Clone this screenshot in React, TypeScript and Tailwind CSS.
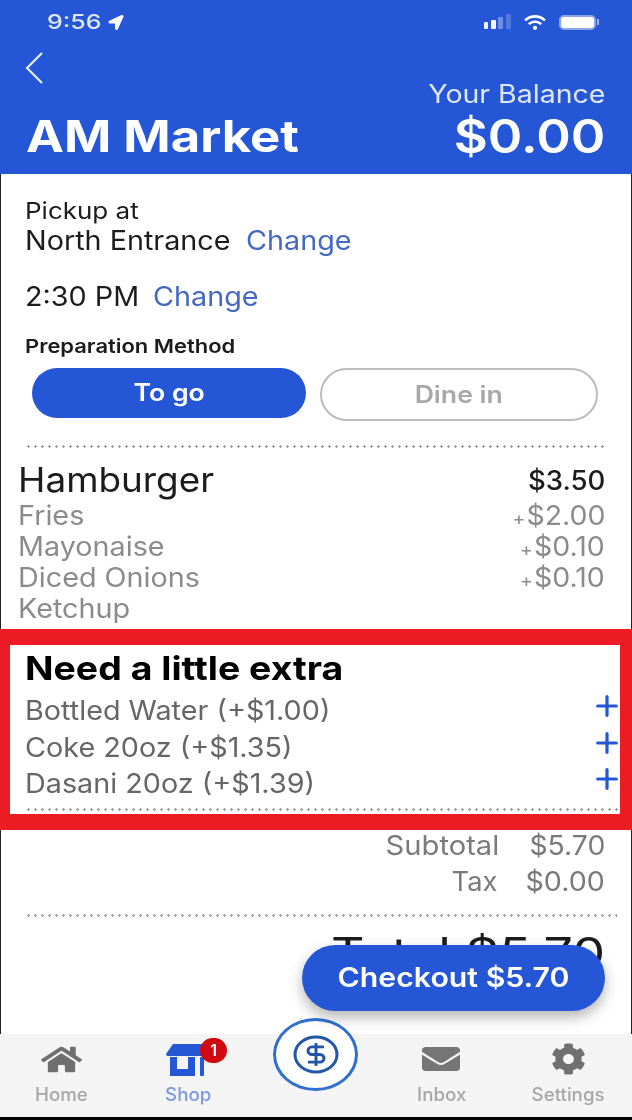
import { Plus } from "lucide-react";
import { FaCog, FaEnvelope, FaHome, FaLocationArrow, FaWifi } from "react-icons/fa";

const sides = [
  { name: "Fries", price: "$2.00" },
  { name: "Mayonaise", price: "$0.10" },
  { name: "Diced Onions", price: "$0.10" },
  { name: "Ketchup", price: "" },
];

const extras = ["Bottled Water (+$1.00)", "Coke 20oz (+$1.35)", "Dasani 20oz (+$1.39)"];

// the screenshot is stretched sideways, so most text gets a horizontal scale
const wideLeft = "inline-block origin-left scale-x-[1.085]";
const wideRight = "inline-block origin-right scale-x-[1.075]";

function Dots({ className }: { className: string }) {
  return (
    <div
      className={`h-[3px] shrink-0 bg-[radial-gradient(circle,#9a9a9a_1.1px,transparent_1.4px)] bg-[length:7px_3px] ${className}`}
    />
  );
}

function StatusBar() {
  return (
    <div className="flex h-[44px] items-center justify-between pl-[47px] pr-[33px] text-[#dfe7fa]">
      <div className="flex items-center gap-[17px] text-[20px] font-medium leading-none">
        <span className="inline-block origin-left scale-x-[1.25]">9:56</span>
        <FaLocationArrow className="h-[15px] w-[16px] text-white" />
      </div>
      <div className="flex items-center gap-[11px]">
        <svg width="28" height="16" viewBox="0 0 28 16">
          <rect x="0" y="8" width="4" height="7" rx="1" fill="#f2f5fe" />
          <rect x="7" y="6" width="5" height="9" rx="1" fill="#f2f5fe" />
          <rect x="14" y="3" width="5" height="12" rx="1" fill="#6f90e6" />
          <rect x="22" y="0" width="5" height="15" rx="1" fill="#4f78e0" />
        </svg>
        <FaWifi className="h-[17px] w-[24px] text-white" />
        <div className="ml-[1px] flex items-center gap-[1px]">
          <div className="h-[15px] w-[37px] rounded-[5px] border-2 border-[#8aa5ea] bg-white" />
          <div className="h-[6px] w-[2px] bg-[#9fb5ee]" />
        </div>
      </div>
    </div>
  );
}

function ShopIcon() {
  return (
    <svg width="43" height="32" viewBox="0 0 43 32" fill="#2456d6">
      <path d="M7 0h29l7 10a2 2 0 0 1-2 2H2a2 2 0 0 1-2-2z" />
      <path d="M4 13h25v19H4zM11 13v12h11V13z" fillRule="evenodd" />
      <rect x="34" y="13" width="4" height="19" rx="1" />
    </svg>
  );
}

function PayIcon() {
  return (
    <svg width="46" height="39" viewBox="0 0 46 39" fill="none" stroke="#2456a8" strokeWidth="3">
      <ellipse cx="23" cy="19.5" rx="21" ry="17.5" />
      <g transform="translate(23 19.5) scale(2 1.9) translate(-12 -12)" strokeWidth="1.5">
        <path d="M16 8h-6a2 2 0 1 0 0 4h4a2 2 0 1 1 0 4H8" />
        <path d="M12 18V6" />
      </g>
    </svg>
  );
}

function NavItem({ label, active, children }: { label: string; active?: boolean; children: React.ReactNode }) {
  return (
    <div className="flex w-[90px] flex-col items-center">
      <div className="flex h-[50px] items-center">{children}</div>
      <span
        className={`-mt-[1px] inline-block scale-x-[1.04] text-[18px] font-medium leading-[24px] ${active ? "text-[#7f99de]" : "text-[#a6a6a6]"}`}
      >
        {label}
      </span>
    </div>
  );
}

export default function App() {
  return (
    <div
      className="relative flex h-[1120px] w-[632px] flex-col overflow-hidden border-b-[3px] border-black bg-white text-[#1c1c1c] shadow-[inset_1px_0_0_#222,inset_-1px_0_0_#222] blur-[0.6px]"
      style={{ fontFamily: "Inter, 'Liberation Sans', sans-serif" }}
    >
      <header className="h-[174px] shrink-0 bg-[#2456d6] text-white">
        <StatusBar />
        <svg className="ml-[24px] mt-[8px]" width="20" height="32" viewBox="0 0 20 32" fill="none" stroke="#e6ecfb" strokeWidth="2.2">
          <path d="M18 1 3 16l15 15" />
        </svg>
        <div className="-mt-[5px] flex items-end justify-between pl-[26px] pr-[27px]">
          <h1 className="mb-[2px] origin-left scale-x-[1.155] text-[44px] font-bold leading-[50px]">AM Market</h1>
          <div className="text-right">
            <div className="origin-right scale-x-[1.14] text-[25px] leading-[30px] text-[#dfe7fa]">Your Balance</div>
            <div className="origin-right scale-x-[1.14] text-[46px] font-semibold leading-[54px]">$0.00</div>
          </div>
        </div>
      </header>

      <section className="pl-[25px] pr-[34px] pt-[23px]">
        <div className="origin-left scale-x-[1.13] text-[23px] leading-[28px]">Pickup at</div>
        <div className="flex text-[26.5px] leading-[30px]">
          <span className={wideLeft}>North Entrance</span>
          <span className={`ml-[32px] text-[#4468c4] ${wideLeft}`}>Change</span>
        </div>
        <div className="mt-[26px] flex text-[26.5px] leading-[30px]">
          <span className={wideLeft}>2:30 PM</span>
          <span className={`ml-[23px] text-[#4468c4] ${wideLeft}`}>Change</span>
        </div>
        <div className="mt-[24px] origin-left scale-x-[1.155] text-[19px] font-semibold leading-[24px]">Preparation Method</div>
        <div className="ml-[7px] mt-[9px] flex gap-[14px]">
          <div className="flex h-[50px] w-[274px] items-center justify-center rounded-full bg-[#2456d6] text-[24px] font-semibold text-white">
            <span className="inline-block scale-x-[1.11]">To go</span>
          </div>
          <div className="flex h-[53px] w-[278px] items-center justify-center rounded-full border-2 border-[#bcbcbc] text-[24px] font-semibold text-[#a8a8a8]">
            <span className="inline-block scale-x-[1.11]">Dine in</span>
          </div>
        </div>
      </section>

      <Dots className="ml-[25px] mr-[27px] mt-[24px]" />

      <section className="pl-[18px] pr-[27px] pt-[12px]">
        <div className="flex items-center justify-between">
          <span className={`text-[34px] leading-[40px] ${wideLeft}`}>Hamburger</span>
          <span className="inline-block origin-right scale-x-[1.04] text-[26.5px] font-medium leading-[40px]">$3.50</span>
        </div>
        <div className="text-[26.5px] text-[#8b8b8b]">
          {sides.map((side) => (
            <div key={side.name} className="flex h-[31px] items-center justify-between">
              <span className={wideLeft}>{side.name}</span>
              {side.price && (
                <span className={wideRight}>
                  <span className="mr-[1px] text-[18px]">+</span>
                  {side.price}
                </span>
              )}
            </div>
          ))}
        </div>
      </section>

      <section className="mt-[5px] h-[201px] shrink-0 border-y-[16px] border-l-[10px] border-r-[12px] border-[#ed1c24] pl-[15px]">
        <h2 className="origin-left scale-x-[1.135] pt-[5px] text-[33px] font-bold leading-[36px] text-black">Need a little extra</h2>
        <div className="mt-[7px]">
          {extras.map((extra) => (
            <div key={extra} className="flex h-[36.5px] items-center justify-between text-[26.5px] text-[#666666]">
              <span className={wideLeft}>{extra}</span>
              <Plus className="-mr-[3px] mb-[10px] h-[32px] w-[32px] text-[#2456d6]" strokeWidth={2.4} />
            </div>
          ))}
        </div>
        <Dots className="mt-[5px]" />
      </section>

      <section className="-mt-[2px] pr-[27px] text-[27px] text-[#7a7a7a]">
        <div className="flex h-[36px] items-center justify-end gap-[33px]">
          <span className="inline-block origin-right scale-x-[1.08]">Subtotal</span>
          <span className="inline-block origin-right scale-x-[1.05]">$5.70</span>
        </div>
        <div className="flex h-[36px] items-center justify-end gap-[33px]">
          <span className="inline-block origin-right scale-x-[1.01]">Tax</span>
          <span className="inline-block origin-right scale-x-[1.06]">$0.00</span>
        </div>
      </section>

      <Dots className="ml-[25px] mr-[15px] mt-[14px]" />

      <div className="mt-[13px] pr-[27px] text-right text-[42px] leading-[46px]">
        <span className="inline-block origin-right scale-x-[1.24]">Total $5.70</span>
      </div>

      <nav className="mt-auto flex h-[83px] shrink-0 items-start justify-between bg-[#f4f4f4] pl-[16px] pr-[19px]">
        <NavItem label="Home">
          <FaHome className="h-[29px] w-[41px] text-[#6f6f6f]" preserveAspectRatio="none" />
        </NavItem>
        <NavItem label="Shop" active>
          <div className="relative mt-[1px]">
            <ShopIcon />
            <div className="absolute -right-[18px] -top-[6px] flex h-[25px] w-[27px] items-center justify-center rounded-full bg-[#d10a11] text-[16px] font-semibold text-white">
              1
            </div>
          </div>
        </NavItem>
        <div className="w-[90px]" />
        <NavItem label="Inbox">
          <FaEnvelope className="h-[32px] w-[38px] text-[#757575]" preserveAspectRatio="none" />
        </NavItem>
        <NavItem label="Settings">
          <FaCog className="h-[32px] w-[35px] text-[#707070]" preserveAspectRatio="none" />
        </NavItem>
      </nav>

      <div className="absolute left-[273px] top-[1018px] flex h-[73px] w-[85px] items-center justify-center rounded-[50%] border-[3px] border-[#2f6fcf] bg-white">
        <PayIcon />
      </div>

      <button className="absolute left-[302px] top-[945px] h-[66px] w-[303px] rounded-full bg-[#2456d6] text-[27px] font-semibold text-white shadow-[0_6px_14px_rgba(0,0,0,0.3)]">
        <span className="inline-block scale-x-[1.12]">Checkout $5.70</span>
      </button>
    </div>
  );
}
